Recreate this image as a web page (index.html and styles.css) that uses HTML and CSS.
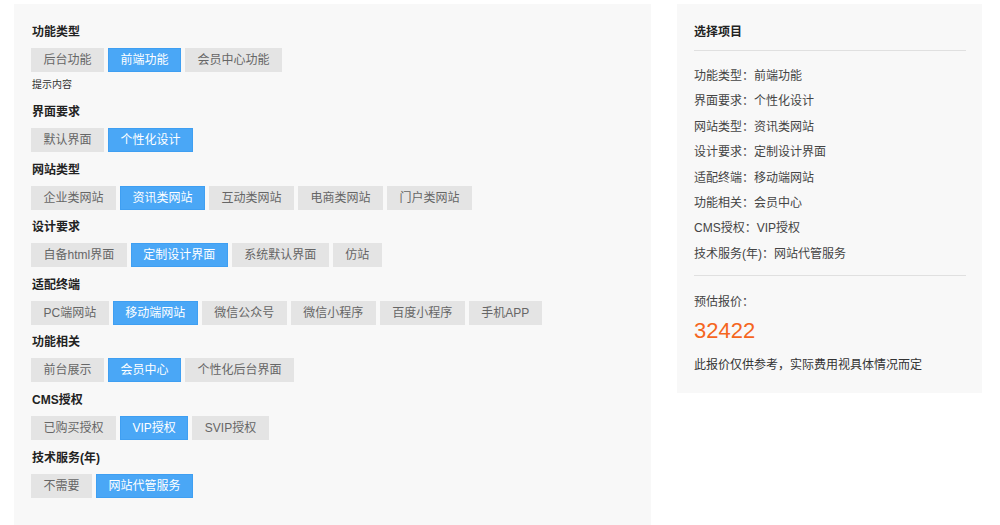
FILE: index.html
```html
<!DOCTYPE html>
<html lang="zh-CN">
<head>
<meta charset="utf-8">
<title>报价</title>
<link rel="stylesheet" href="styles.css">
</head>
<body>
<div class="page">
  <div class="options">
    <div class="section">
      <div class="label">功能类型</div>
      <div class="btns">
        <span class="btn">后台功能</span><span class="btn active">前端功能</span><span class="btn">会员中心功能</span>
      </div>
      <div class="hint">提示内容</div>
    </div>
    <div class="section">
      <div class="label">界面要求</div>
      <div class="btns">
        <span class="btn">默认界面</span><span class="btn active">个性化设计</span>
      </div>
    </div>
    <div class="section">
      <div class="label">网站类型</div>
      <div class="btns">
        <span class="btn">企业类网站</span><span class="btn active">资讯类网站</span><span class="btn">互动类网站</span><span class="btn">电商类网站</span><span class="btn">门户类网站</span>
      </div>
    </div>
    <div class="section">
      <div class="label">设计要求</div>
      <div class="btns">
        <span class="btn">自备html界面</span><span class="btn active">定制设计界面</span><span class="btn">系统默认界面</span><span class="btn">仿站</span>
      </div>
    </div>
    <div class="section">
      <div class="label">适配终端</div>
      <div class="btns">
        <span class="btn">PC端网站</span><span class="btn active">移动端网站</span><span class="btn">微信公众号</span><span class="btn">微信小程序</span><span class="btn">百度小程序</span><span class="btn">手机APP</span>
      </div>
    </div>
    <div class="section">
      <div class="label">功能相关</div>
      <div class="btns">
        <span class="btn">前台展示</span><span class="btn active">会员中心</span><span class="btn">个性化后台界面</span>
      </div>
    </div>
    <div class="section">
      <div class="label">CMS授权</div>
      <div class="btns">
        <span class="btn">已购买授权</span><span class="btn active">VIP授权</span><span class="btn">SVIP授权</span>
      </div>
    </div>
    <div class="section">
      <div class="label">技术服务(年)</div>
      <div class="btns">
        <span class="btn">不需要</span><span class="btn active">网站代管服务</span>
      </div>
    </div>
  </div>
  <div class="summary">
    <div class="sum-title">选择项目</div>
    <div class="divider first"></div>
    <ul class="items">
      <li>功能类型：前端功能</li>
      <li>界面要求：个性化设计</li>
      <li>网站类型：资讯类网站</li>
      <li>设计要求：定制设计界面</li>
      <li>适配终端：移动端网站</li>
      <li>功能相关：会员中心</li>
      <li>CMS授权：VIP授权</li>
      <li>技术服务(年)：网站代管服务</li>
    </ul>
    <div class="divider second"></div>
    <div class="price-label">预估报价：</div>
    <div class="price">32422</div>
    <div class="note">此报价仅供参考，实际费用视具体情况而定</div>
  </div>
</div>
</body>
</html>
```
FILE: styles.css
```css
html, body {
  margin: 0;
  padding: 0;
  background: #ffffff;
  overflow: hidden;
}
body {
  font-family: "Liberation Sans", "Noto Sans CJK SC", sans-serif;
  font-size: 12px;
  color: #333;
}
.page {
  display: flex;
  align-items: flex-start;
  gap: 26px;
  padding: 4px 0 0 14px;
}
.options {
  width: 637px;
  box-sizing: border-box;
  background: #f8f8f8;
  padding: 17.7px 17px 40px 17px;
}
.section {
  margin-bottom: 7.6px;
}
.label {
  font-weight: bold;
  line-height: 20px;
  color: #222;
  margin-bottom: 6px;
  padding-left: 1px;
}
.btns {
  display: flex;
  gap: 4px;
}
.btn {
  display: block;
  height: 24px;
  box-sizing: border-box;
  line-height: 22px;
  padding: 0 11.5px;
  border: 1px solid #e4e4e4;
  background: #e4e4e4;
  color: #666;
  white-space: nowrap;
}
.btn.active {
  background: #4aa7f6;
  border-color: #3f9ff2;
  color: #fff;
}
.hint {
  font-size: 10px;
  line-height: 14px;
  margin: 6.3px 0 0 1px;
  padding-bottom: 2.5px;
  color: #333;
}
.summary {
  width: 305px;
  box-sizing: border-box;
  background: #f8f8f8;
  padding: 18px 16px 18px 17px;
}
.sum-title {
  font-weight: bold;
  line-height: 20px;
  color: #222;
}
.divider {
  height: 1px;
  background: #e0e0e0;
}
.divider.first {
  margin: 7.5px 0 13.5px;
}
.items {
  list-style: none;
  margin: 0;
  padding: 0;
}
.items li {
  line-height: 25.4px;
  color: #444;
}
.divider.second {
  margin: 8px 0 16px;
}
.price-label {
  line-height: 20px;
  color: #444;
}
.price {
  font-size: 22px;
  line-height: 30px;
  margin-top: 3.5px;
  color: #f5661e;
}
.note {
  line-height: 20px;
  margin-top: 9px;
  color: #333;
}
```
